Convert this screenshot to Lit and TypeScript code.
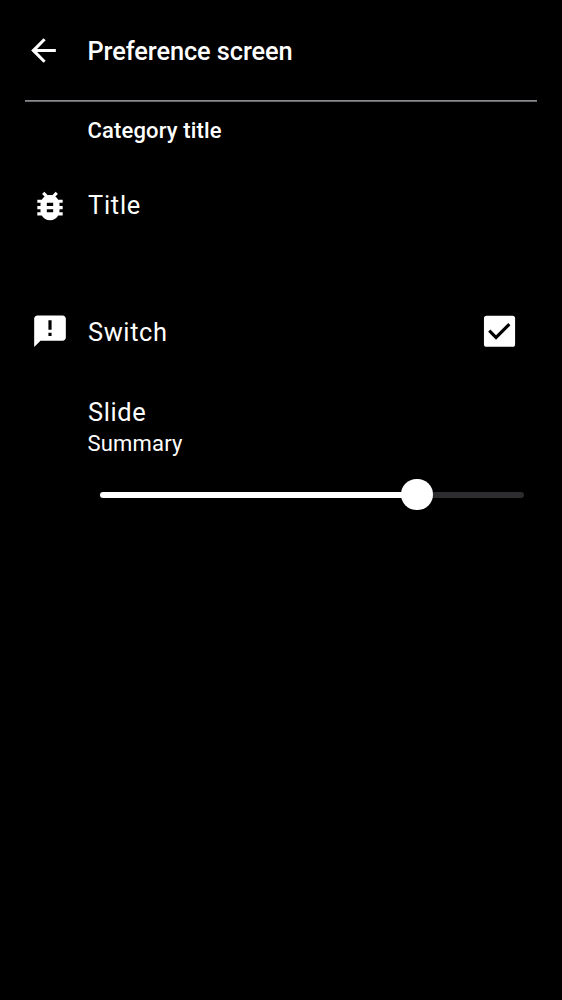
import { LitElement, html, css } from "lit";
import { customElement, state } from "lit/decorators.js";

@customElement("app-root")
export class AppRoot extends LitElement {
  @state() private progress = 74.7;

  static styles = css`
    :host { display: flex; flex-direction: column; height: 1000px; background: #000; color: #fff; font-family: Roboto, "Noto Sans", sans-serif; overflow: hidden; }
    * { box-sizing: border-box; }
    svg { display: block; fill: #fff; flex: none; }
    header { display: flex; align-items: center; height: 100px; padding-left: 25.3px; }
    h1 { margin: 1px 0 0 25.2px; font-size: 25.4px; line-height: 30px; font-weight: 500; letter-spacing: -0.1px; }
    .back { width: 37px; height: 37px; }
    .divider { height: 2px; margin: 0 25px; background: linear-gradient(#8a8a8e 50%, #68686c 50%); }
    h2 { margin: 14px 0 0 87.5px; font-size: 22px; line-height: 30px; font-weight: 500; letter-spacing: 0.15px; }
    .row { display: flex; align-items: center; padding-left: 31px; height: 79px; }
    .first { margin-top: 20px; }
    .switch { margin-top: 46px; height: 79px; }
    .icon { width: 38px; height: 38px; }
    .label { margin-left: 19px; font-size: 25.4px; line-height: 30px; letter-spacing: 0.6px; flex: 1; }
    .first .label { margin-top: -1px; letter-spacing: 0.75px; }
    .switch .label { margin-top: 2px; }
    .check { width: 42px; height: 42px; margin-right: 42px; }
    .slide { padding: 27px 37.8px 0 88px; }
    .title { font-size: 25.4px; line-height: 30px; letter-spacing: 0.65px; }
    .summary { margin: 2px 0 0 -0.5px; font-size: 22px; line-height: 30px; letter-spacing: 0.2px; }
    .slider { display: flex; align-items: center; height: 32px; margin: 19.6px 0 0 12px; }
    .filled { height: 6px; border-radius: 3px 0 0 3px; background: #fff; }
    .thumb { width: 31.4px; height: 31.4px; border-radius: 50%; background: #fff; margin: 0 -15.7px; flex: none; z-index: 1; }
    .rest { flex: 1; height: 6px; border-radius: 0 3px 3px 0; background: #2d2d2f; }
  `;

  render() {
    return html`
      <header>
        <svg class="back" viewBox="0 0 24 24"><path d="M20 11H7.83l5.59-5.59L12 4l-8 8 8 8 1.41-1.41L7.83 13H20v-2z"/></svg>
        <h1>Preference screen</h1>
      </header>
      <div class="divider"></div>
      <h2>Category title</h2>
      <div class="row first">
        <svg class="icon" viewBox="0 0 24 24"><path d="M20 8h-2.81c-.45-.78-1.07-1.45-1.82-1.96L17 4.41 15.59 3l-2.17 2.17C12.96 5.06 12.49 5 12 5s-.96.06-1.41.17L8.41 3 7 4.41l1.62 1.63C7.88 6.55 7.26 7.22 6.81 8H4v2h2.09c-.05.33-.09.66-.09 1v1H4v2h2v1c0 .34.04.67.09 1H4v2h2.81c1.04 1.79 2.97 3 5.19 3s4.15-1.21 5.19-3H20v-2h-2.09c.05-.33.09-.66.09-1v-1h2v-2h-2v-1c0-.34-.04-.67-.09-1H20V8zm-6 8h-4v-2h4v2zm0-4h-4v-2h4v2z"/></svg>
        <span class="label">Title</span>
      </div>
      <div class="row switch">
        <svg class="icon" viewBox="0 -0.15 24 24"><path d="M20 2H4c-1.1 0-1.99.9-1.99 2L2 22l4-4h14c1.1 0 2-.9 2-2V4c0-1.1-.9-2-2-2zm-7 13h-2v-2h2v2zm0-4h-2V5h2v6z"/></svg>
        <span class="label">Switch</span>
        <svg class="check" viewBox="-0.3 -0.15 24 24"><path fill-rule="evenodd" d="M4.6 3.1h14.8A1.5 1.5 0 0 1 20.9 4.6v14.8a1.5 1.5 0 0 1-1.5 1.5h-14.8A1.5 1.5 0 0 1 3.1 19.4v-14.8A1.5 1.5 0 0 1 4.6 3.1zM10 16.8l-4.5-4.5 1.25-1.25 3.25 3.25 7-7 1.25 1.25z"/></svg>
      </div>
      <div class="slide">
        <div class="title">Slide</div>
        <div class="summary">Summary</div>
        <div class="slider">
          <div class="filled" style="width:${this.progress}%"></div>
          <div class="thumb"></div>
          <div class="rest"></div>
        </div>
      </div>
    `;
  }
}
